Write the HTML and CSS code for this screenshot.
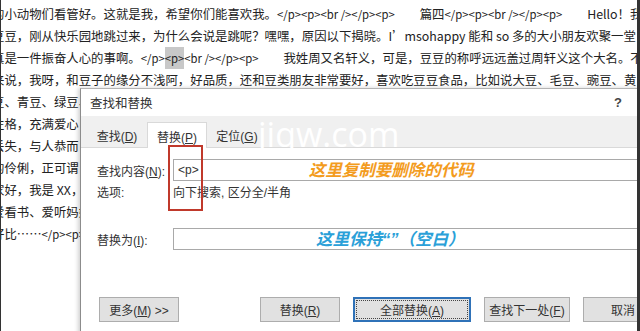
FILE: index.html
```html
<!DOCTYPE html>
<html lang="zh">
<head>
    <meta charset="UTF-8">
    <title>查找和替换</title>
    <link rel="stylesheet" href="styles.css">
</head>
<body>

    <div class="doc">
        <p>的小动物们看管好。这就是我，希望你们能喜欢我。<span class="tag">&lt;/p&gt;&lt;p&gt;&lt;br /&gt;&lt;/p&gt;&lt;p&gt;</span>　　篇四<span class="tag">&lt;/p&gt;&lt;p&gt;&lt;br /&gt;&lt;/p&gt;&lt;p&gt;</span>　　Hello！我是豆豆</p>
        <p>豆豆，刚从快乐园地跳过来，为什么会说是跳呢？嘿嘿，原因以下揭晓。I’msohappy 能和 so 多的大小朋友欢聚一堂，</p>
        <p>真是一件振奋人心的事啊。<span class="tag">&lt;/p&gt;<span class="hl">&lt;p&gt;</span>&lt;br /&gt;&lt;/p&gt;&lt;p&gt;</span>　　我姓周又名轩义，可是，豆豆的称呼远远盖过周轩义这个大名。不</p>
        <p>来说，我呀，和豆子的缘分不浅阿，好品质，还和豆类朋友非常要好，喜欢吃豆豆食品，比如说大豆、毛豆、豌豆、黄</p>
        <p>豆、青豆、绿豆、</p>
        <p>性格，充满爱心</p>
        <p>丢失，与人恭而</p>
        <p>的伶俐，正可谓，</p>
        <p>家好，我是 XX，</p>
        <p>爱看书、爱听妈妈</p>
        <p>好比……<span class="tag">&lt;/p&gt;&lt;p&gt;</span></p>
    </div>

    <section class="dialog">
        <div class="titlebar">
            <span>查找和替换</span>
            <span class="help">?</span>
        </div>

        <div class="tabband">
            <div class="tab">查找(<u>D</u>)</div>
            <div class="tab active">替换(<u>P</u>)</div>
            <div class="tab">定位(<u>G</u>)</div>
        </div>

        <div class="panel">
            <div class="row">
                <label class="label">查找内容(<u>N</u>):</label>
                <div class="field">
                    <span>&lt;p&gt;</span>
                    <span class="note orange">这里复制要删除的代码</span>
                </div>
            </div>
            <div class="options">
                <span class="label">选项:</span>
                <span>向下搜索, 区分全/半角</span>
            </div>
            <div class="row replace">
                <label class="label">替换为(<u>I</u>):</label>
                <div class="field">
                    <span class="note blue">这里保持“”（空白）</span>
                </div>
            </div>

            <div class="buttons">
                <button class="btn">更多(<u>M</u>) &gt;&gt;</button>
                <button class="btn push">替换(<u>R</u>)</button>
                <button class="btn wide focused">全部替换(<u>A</u>)</button>
                <button class="btn next">查找下一处(<u>F</u>)</button>
                <button class="btn">取消</button>
            </div>
        </div>

        <div class="watermark">jiqw.com</div>
        <div class="marker"></div>
    </section>

    <div class="edge left"></div>
    <div class="edge right"></div>

</body>
</html>
```

FILE: styles.css
```css
body {
    margin: 0;
    width: 640px;
    height: 331px;
    overflow: hidden;
    position: relative;
    background-color: #fff;
    color: #222;
    font-family: "Liberation Sans", "Noto Sans CJK SC", sans-serif;
}

.doc {
    margin-left: -8px;
    padding-top: 3px;
    font-family: "Noto Sans CJK SC", sans-serif;
    font-size: 12.4px;
    line-height: 22px;
    white-space: nowrap;
    overflow: hidden;
}

.doc p {
    margin: 0;
}

.tag {
    font-size: 11.3px;
}

.hl {
    background-color: #c8c8c8;
    padding: 3px 0;
}

.dialog {
    position: absolute;
    left: 80px;
    top: 88px;
    width: 560px;
    height: 250px;
    background-color: #fff;
    border-left: 1px solid #8c8c8c;
    border-top: 1px solid #b4b4b4;
    box-shadow: -2px 0 4px rgba(0, 0, 0, 0.18);
    font-family: "Liberation Sans", "Noto Sans CJK SC", sans-serif;
    font-size: 12px;
    color: #333;
}

.titlebar {
    height: 27px;
    display: flex;
    align-items: center;
    justify-content: space-between;
    padding: 0 19px 0 9px;
    font-size: 12.5px;
}

.help {
    font-weight: bold;
    font-size: 13px;
    color: #444;
}

.tabband {
    height: 32px;
    box-sizing: border-box;
    display: flex;
    align-items: flex-end;
    padding-left: 6px;
    background-color: #f0f0f0;
    border-bottom: 1px solid #d9d9d9;
}

.tab {
    width: 60px;
    height: 25px;
    box-sizing: border-box;
    padding-top: 7px;
    line-height: 16px;
    text-align: center;
}

.tab.active {
    height: 26px;
    margin-bottom: -1px;
    background-color: #fff;
    border: 1px solid #d9d9d9;
    border-bottom: none;
}

.panel {
    padding: 11px 0 0 16px;
}

.row {
    display: flex;
    align-items: center;
    height: 22px;
}

.label {
    width: 76px;
    flex-shrink: 0;
}

.field {
    flex: 1;
    height: 22px;
    box-sizing: border-box;
    display: flex;
    align-items: center;
    padding-left: 4px;
    border: 1px solid #a9a9a9;
    border-right: none;
}

.note {
    font-size: 16.5px;
    font-weight: bold;
    font-style: italic;
    line-height: 20px;
}

.note.orange {
    margin-left: 110px;
    color: #f39c1e;
}

.note.blue {
    margin-left: 138px;
    color: #2aa0d8;
}

.options {
    display: flex;
    margin-top: 4px;
    line-height: 16px;
}

.row.replace {
    margin-top: 27px;
}

.buttons {
    display: flex;
    gap: 13px;
    margin-top: 47px;
    padding-left: 2px;
}

.btn {
    width: 80px;
    height: 25px;
    flex-shrink: 0;
    padding: 0;
    background-color: #e1e1e1;
    border: 1px solid #adadad;
    font-family: "Liberation Sans", "Noto Sans CJK SC", sans-serif;
    font-size: 12px;
    color: #333;
}

.btn.push {
    margin-left: 68px;
}

.btn.wide {
    width: 118px;
}

.btn.next {
    width: 86px;
}

.btn.focused {
    border: 1px solid #2f72b8;
    box-shadow: inset 0 0 0 1px #2f72b8;
    outline: 1px dotted #444;
    outline-offset: -4px;
}

.watermark {
    position: absolute;
    left: 177px;
    top: 28px;
    font-family: "Open Sans", "Liberation Sans", sans-serif;
    font-size: 34px;
    line-height: 34px;
    color: #fff;
}

.marker {
    position: absolute;
    left: 87px;
    top: 56px;
    width: 31px;
    height: 62px;
    border: 2px solid #c0392b;
}

.edge {
    position: absolute;
    top: 0;
    height: 331px;
    background-color: #333;
}

.edge.left {
    left: 0;
    width: 1px;
}

.edge.right {
    right: 0;
    width: 3px;
}
```
